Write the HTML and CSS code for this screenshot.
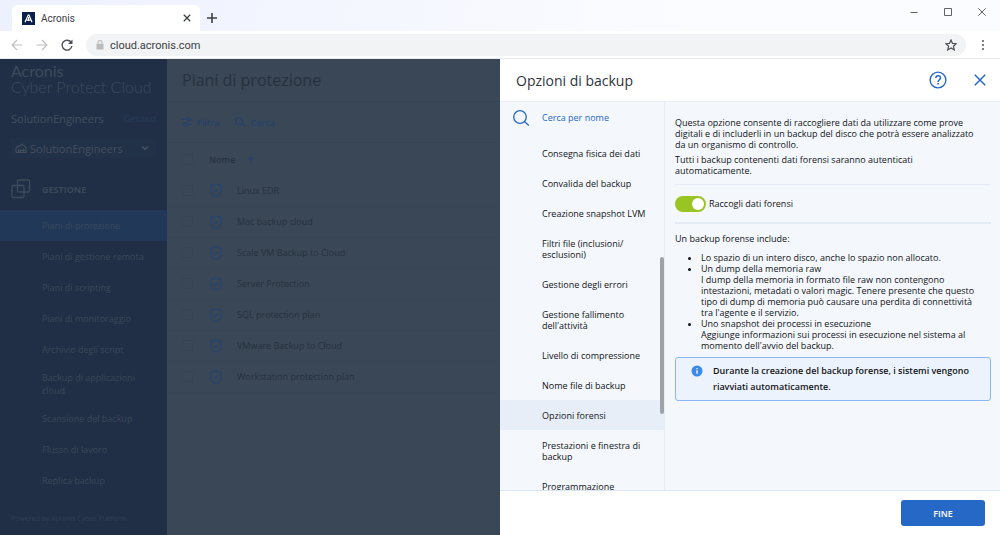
FILE: index.html
```html
<!DOCTYPE html>
<html lang="it">
<head>
  <meta charset="UTF-8">
  <meta name="viewport" content="width=device-width, initial-scale=1.0">
  <title>Acronis</title>
  <link rel="stylesheet" href="styles.css">
</head>
<body>
  <header class="browser">
    <div class="tab-strip">
      <div class="tab">
        <svg class="favicon" width="13" height="13" viewBox="0 0 13 13"><rect width="13" height="13" fill="#0b1f4d"/><path d="M3 10.2 6.2 3h.8l3 7.2M4.6 8.2h3.9M6.6 5v4" fill="none" stroke="#fff" stroke-width="1.2"/></svg>
        <span class="tab-title">Acronis</span>
        <button class="plain" aria-label="Chiudi scheda"><svg width="8" height="8" viewBox="0 0 8 8"><path d="M.8.8l6.4 6.4M7.2.8.8 7.2" stroke="#3c4043" stroke-width="1.3"/></svg></button>
      </div>
      <button class="plain new-tab" aria-label="Nuova scheda"><svg width="10" height="10" viewBox="0 0 10 10"><path d="M5 0v10M0 5h10" stroke="#3c4043" stroke-width="1.6"/></svg></button>
      <div class="window-buttons">
        <button class="plain" aria-label="Riduci"><svg width="8" height="8" viewBox="0 0 8 8"><path d="M.5 4.5h7" stroke="#5f6368"/></svg></button>
        <button class="plain" aria-label="Ingrandisci"><svg width="8" height="8" viewBox="0 0 8 8"><path d="M.5.5h7v7h-7z" fill="none" stroke="#5f6368"/></svg></button>
        <button class="plain" aria-label="Chiudi"><svg width="8" height="8" viewBox="0 0 8 8"><path d="M.3.3l7.4 7.4M7.7.3.3 7.7" stroke="#5f6368"/></svg></button>
      </div>
    </div>
    <div class="toolbar">
      <button class="plain" aria-label="Indietro"><svg width="12" height="12" viewBox="0 0 12 12"><path d="M11.3 6H1.2M6 1 1.1 6 6 11" fill="none" stroke="#bdbfc1" stroke-width="1.2"/></svg></button>
      <button class="plain" aria-label="Avanti"><svg width="12" height="12" viewBox="0 0 12 12"><path d="M.7 6h10.1M6 1l4.9 5L6 11" fill="none" stroke="#bdbfc1" stroke-width="1.2"/></svg></button>
      <button class="plain" aria-label="Ricarica"><svg width="12" height="12" viewBox="0 0 12 12"><path d="M10.3 3.7A4.9 4.9 0 1 0 10.9 7" fill="none" stroke="#4d5156" stroke-width="1.4"/><path d="M11.5.6v4.500H7z" fill="#4d5156"/></svg></button>
      <label class="address">
        <svg width="8" height="10" viewBox="0 0 8 10"><path d="M.5 3.8h7v5.700h-7z" fill="#b9bbbd"/><path d="M2 4V2.500a2 2 0 0 1 4 0V4" fill="none" stroke="#b9bbbd" stroke-width="1.1"/></svg>
        <input type="text" value="cloud.acronis.com" aria-label="Indirizzo">
        <svg width="12" height="12" viewBox="0 0 12 12"><path d="M6 1l1.500 3.400 3.700.3-2.800 2.500.9 3.700L6 8.900l-3.300 2 .9-3.700L.8 4.700l3.700-.3z" fill="none" stroke="#4d5156" stroke-width="1.2"/></svg>
      </label>
      <button class="plain menu-button" aria-label="Menu"><svg width="4" height="12" viewBox="0 0 4 12" fill="#5f6368"><circle cx="2" cy="2" r="1.1"/><circle cx="2" cy="6" r="1.1"/><circle cx="2" cy="10" r="1.1"/></svg></button>
    </div>
  </header>

  <div class="app">
    <aside class="sidebar">
      <div class="brand">
        <div class="brand-name">Acronis</div>
        <div class="brand-product">Cyber Protect Cloud</div>
      </div>
      <div class="tenant">
        <span>SolutionEngineers</span>
        <a href="#">Gestisci</a>
      </div>
      <div class="tenant-select">
        <svg width="12" height="10" viewBox="0 0 12 10"><path d="M1 9.400V5L4 2.500M3.500 4.200 7 1l4 3.500v5H1M3.500 9V6.500M5.500 9V6M8.500 9V5.500M4 7.500h6" fill="none" stroke="#424e5c" stroke-width="1.2"/></svg>
        <select aria-label="Tenant"><option>SolutionEngineers</option></select>
        <svg width="8" height="6" viewBox="0 0 8 6"><path d="M1 1.500l3 2.700 3-2.700" fill="none" stroke="#4a5563" stroke-width="1.4"/></svg>
      </div>
      <div class="section-title">
        <svg width="20" height="20" viewBox="0 0 20 20"><g fill="none" stroke="#3d4b5c" stroke-width="1.3"><rect x="6.500" y="1" width="12" height="12" rx="1"/><rect x="1" y="6.500" width="12" height="12" rx="1"/></g></svg>
        GESTIONE
      </div>
      <nav class="side-nav">
        <a class="active" href="#">Piani di protezione</a>
        <a href="#">Piani di gestione remota</a>
        <a href="#">Piani di scripting</a>
        <a href="#">Piani di monitoraggio</a>
        <a href="#">Archivio degli script</a>
        <a href="#">Backup di applicazioni cloud</a>
        <a href="#">Scansione del backup</a>
        <a href="#">Flusso di lavoro</a>
        <a href="#">Replica backup</a>
      </nav>
      <div class="powered">Powered by Acronis Cyber Platform</div>
    </aside>

    <main class="plans">
      <h1>Piani di protezione</h1>
      <div class="actions">
        <button class="plain"><svg width="10" height="10" viewBox="0 0 10 10"><g fill="none" stroke="#26426c" stroke-width="1.2"><path d="M0 2.500h5M8.500 2.500H10M0 7.500h1.500M5 7.500h5"/><circle cx="6.700" cy="2.500" r="1.6"/><circle cx="3.200" cy="7.500" r="1.6"/></g></svg>Filtra</button>
        <button class="plain"><svg width="10" height="10" viewBox="0 0 10 10"><g fill="none" stroke="#26426c" stroke-width="1.3"><circle cx="4.200" cy="4.200" r="3.4"/><path d="M6.700 6.700 9.500 9.500"/></g></svg>Cerca</button>
      </div>
      <table>
        <thead>
          <tr>
            <th class="check"><input type="checkbox" aria-label="Seleziona tutto"></th>
            <th colspan="2">Nome <svg class="sort" width="6" height="8" viewBox="0 0 6 8"><path d="M3 7.500V1M.5 3.500 3 1l2.500 2.500" fill="none" stroke="#26426c" stroke-width="1.2"/></svg></th>
          </tr>
        </thead>
        <tbody id="plan-rows"></tbody>
      </table>
    </main>

    <section class="drawer">
      <header class="drawer-header">
        <h2>Opzioni di backup</h2>
        <button class="plain" aria-label="Guida"><svg width="18" height="18" viewBox="0 0 18 18" fill="none" stroke="#2668c5"><circle cx="9" cy="9" r="7.900" stroke-width="1.4"/><path d="M6.800 7.100c0-3.200 4.700-3 4.700-.2 0 1.900-2.400 1.800-2.400 4" stroke-width="1.5"/><path d="M9.100 12v1.600" stroke-width="1.6"/></svg></button>
        <button class="plain" aria-label="Chiudi pannello"><svg width="12" height="12" viewBox="0 0 12 12"><path d="M.8.8l10.400 10.400M11.200.8.8 11.200" stroke="#2668c5" stroke-width="1.5"/></svg></button>
      </header>
      <div class="drawer-body">
        <div class="options">
          <label class="search">
            <svg width="18" height="18" viewBox="0 0 18 18"><g fill="none" stroke="#2668c5" stroke-width="1.3"><circle cx="8" cy="8" r="6.300"/><path d="M12.500 12.500l4.300 4"/></g></svg>
            <input type="text" placeholder="Cerca per nome" aria-label="Cerca per nome">
          </label>
          <nav class="option-list">
            <a href="#">Consegna fisica dei dati</a>
            <a href="#">Convalida del backup</a>
            <a href="#">Creazione snapshot LVM</a>
            <a href="#">Filtri file (inclusioni/<br>esclusioni)</a>
            <a href="#">Gestione degli errori</a>
            <a href="#">Gestione fallimento<br>dell'attività</a>
            <a href="#">Livello di compressione</a>
            <a href="#">Nome file di backup</a>
            <a class="selected" href="#">Opzioni forensi</a>
            <a href="#">Prestazioni e finestra di<br>backup</a>
            <a href="#">Programmazione</a>
          </nav>
          <div class="scroll-thumb"></div>
        </div>
        <div class="detail">
          <p>Questa opzione consente di raccogliere dati da utilizzare come prove digitali e di includerli in un backup del disco che potrà essere analizzato da un organismo di controllo.</p>
          <p>Tutti i backup contenenti dati forensi saranno autenticati automaticamente.</p>
          <label class="toggle">
            <input type="checkbox" checked>
            Raccogli dati forensi
          </label>
          <p class="includes">Un backup forense include:</p>
          <ul>
            <li>Lo spazio di un intero disco, anche lo spazio non allocato.</li>
            <li>Un dump della memoria raw<br>I dump della memoria in formato file raw non contengono intestazioni, metadati o valori magic. Tenere presente che questo tipo di dump di memoria può causare una perdita di connettività tra l'agente e il servizio.</li>
            <li>Uno snapshot dei processi in esecuzione<br>Aggiunge informazioni sui processi in esecuzione nel sistema al momento dell'avvio del backup.</li>
          </ul>
          <div class="note">
            <svg width="12" height="12" viewBox="0 0 12 12"><circle cx="6" cy="6" r="5.500" fill="#3c8ae8"/><path d="M6 5.200v3.500M6 3v1.300" stroke="#fff" stroke-width="1.3"/></svg>
            <span>Durante la creazione del backup forense, i sistemi vengono riavviati automaticamente.</span>
          </div>
        </div>
      </div>
      <footer class="drawer-footer">
        <button class="done">FINE</button>
      </footer>
    </section>
  </div>

  <script>
    const plans = [
      'Linux EDR',
      'Mac backup cloud',
      'Scale VM Backup to Cloud',
      'Server Protection',
      'SQL protection plan',
      'VMware Backup to Cloud',
      'Workstation protection plan'
    ];

    document.getElementById('plan-rows').innerHTML = plans.map(plan => `
      <tr>
        <td class="check"><input type="checkbox" aria-label="${plan}"></td>
        <td class="shield"><svg width="14" height="14" viewBox="0 0 14 14"><g fill="none" stroke="#26466f" stroke-width="1.2"><path d="M7 .7c1.500 1 3.300 1.500 5.400 1.600v4.900c0 3-2 5-5.400 6.200-3.400-1.200-5.400-3.200-5.400-6.200V2.300C3.700 2.200 5.500 1.700 7 .7z"/><path d="M4.700 7l1.600 1.600 3-3.200"/></g></svg></td>
        <td>${plan}</td>
      </tr>`).join('');
  </script>
</body>
</html>
```
FILE: styles.css
```css
* {
  box-sizing: border-box;
}
body {
  margin: 0;
  height: 100vh;
  display: flex;
  flex-direction: column;
  font-family: "Open Sans", "Noto Sans", sans-serif;
  font-size: 9px;
  color: #121417;
  overflow: hidden;
}
a {
  color: inherit;
  text-decoration: none;
}
svg {
  display: block;
  flex-shrink: 0;
}
button, input, select {
  font: inherit;
  color: inherit;
}
.plain {
  display: flex;
  align-items: center;
  background: none;
  border: none;
  padding: 0;
  cursor: pointer;
}

/* browser window */
.browser {
  font-family: Roboto, sans-serif;
  font-size: 10px;
  color: #3c4043;
  border-bottom: 1px solid #ececee;
}
.tab-strip {
  display: flex;
  height: 31px;
  padding: 5px 14px 0 12px;
  background: linear-gradient(100deg, #edf1fe, #fbfcff 70%);
}
.tab {
  display: flex;
  align-items: center;
  gap: 6px;
  width: 188px;
  padding: 0 9px 0 10px;
  background: #fff;
  border-radius: 6px 6px 0 0;
}
.tab-title {
  flex: 1;
}
.new-tab {
  margin-left: 7px;
}
.window-buttons {
  display: flex;
  gap: 26px;
  margin-left: auto;
  height: 13px;
}
.toolbar {
  display: flex;
  align-items: center;
  gap: 13px;
  padding: 3px 15px 2px 11px;
  background: #fff;
}
.address {
  display: flex;
  align-items: center;
  gap: 6px;
  flex: 1;
  height: 22px;
  padding: 0 9px 0 10px;
  background: #f1f3f4;
  border-radius: 11px;
}
.address input {
  flex: 1;
  padding: 0;
  border: none;
  background: none;
  font-size: 11px;
}
.menu-button {
  margin-left: 2px;
}

/* dimmed console */
.app {
  display: flex;
  flex: 1;
  min-height: 0;
}
.sidebar {
  display: flex;
  flex-direction: column;
  width: 167px;
  background: #202f46;
  color: #3a4858;
}
.brand {
  padding: 4px 11px 0;
  font-family: Lato, sans-serif;
  font-size: 16px;
  line-height: 16px;
  color: #3d4b5c;
}
.brand-product {
  font-weight: 300;
}
.tenant {
  display: flex;
  justify-content: space-between;
  align-items: center;
  margin: 16px 11px 0;
  line-height: 16px;
  font-size: 11px;
  color: #43505f;
}
.tenant a {
  font-size: 9px;
  color: #263d60;
}
.tenant-select {
  display: flex;
  align-items: center;
  gap: 3px;
  height: 20px;
  margin: 11px 11px 0;
  padding: 0 7px 0 4px;
  background: #213147;
  color: #43505f;
}
.tenant-select select {
  flex: 1;
  min-width: 0;
  padding: 0;
  border: none;
  background: none;
  appearance: none;
  font-size: 11px;
}
.section-title {
  display: flex;
  align-items: center;
  gap: 11px;
  height: 52px;
  padding-left: 11px;
  padding-top: 10px;
  font-weight: 700;
}
.side-nav a {
  display: flex;
  align-items: center;
  min-height: 31px;
  padding: 6px 20px 6px 42px;
  line-height: 13px;
}
.side-nav .active {
  background: #213859;
}
.powered {
  margin-top: auto;
  padding: 0 11px 10px;
  font-size: 7px;
  line-height: 12px;
  color: #304055;
}
.plans {
  flex: 1;
  min-width: 0;
  background: #3a4756;
  color: #26313f;
}
.plans h1 {
  margin: 0;
  padding-left: 15px;
  line-height: 42px;
  font-size: 16px;
  font-weight: 400;
  border-bottom: 1px solid #374453;
}
.actions {
  display: flex;
  gap: 16px;
  height: 41px;
  padding-left: 15px;
  font-weight: 600;
  color: #26426c;
  border-bottom: 1px solid #374453;
}
.actions button {
  gap: 5px;
}
table {
  width: 100%;
  border-collapse: collapse;
}
tr {
  height: 31px;
}
thead tr {
  height: 32px;
}
tbody tr {
  border-bottom: 1px solid #384554;
}
th, td {
  padding: 0;
  text-align: left;
}
th {
  font-weight: 600;
}
.check {
  width: 42px;
  padding-left: 15px;
}
.check input {
  display: block;
  appearance: none;
  width: 11px;
  height: 11px;
  margin: 0;
  border: 1px solid #374454;
  border-radius: 2px;
}
.sort {
  display: inline-block;
  vertical-align: middle;
  margin-left: 10px;
}
.shield {
  width: 28px;
}

/* backup options drawer */
.drawer {
  display: flex;
  flex-direction: column;
  width: 50%;
  background: #fff;
}
.drawer-header {
  display: flex;
  align-items: center;
  gap: 27px;
  height: 42px;
  padding: 0 14px 0 16px;
}
.drawer-header h2 {
  flex: 1;
  margin: 0;
  font-size: 14px;
  font-weight: 400;
  color: #30343b;
}
.drawer-body {
  display: flex;
  flex: 1;
  min-height: 0;
  background: #f4f7fc;
  border-top: 1px solid #e9eff8;
  border-bottom: 1px solid #dae6f3;
}
.options {
  position: relative;
  width: 33%;
  overflow: hidden;
  border-right: 1px solid #e6edf7;
}
.search {
  display: flex;
  align-items: center;
  gap: 12px;
  height: 31px;
  padding-left: 12px;
}
.search input {
  flex: 1;
  min-width: 0;
  padding: 0;
  border: none;
  background: none;
}
.search input::placeholder {
  color: #2668c5;
}
.option-list {
  padding-top: 5px;
}
.option-list a {
  display: block;
  padding: 10px 12px 9px 42px;
  line-height: 11px;
}
.option-list .selected {
  background: #e7eef8;
}
.scroll-thumb {
  position: absolute;
  top: 155px;
  right: 0;
  width: 4px;
  height: 157px;
  border-radius: 2px;
  background: #9fa3a8;
}
.detail {
  flex: 1;
  padding: 15px 9px 0 10px;
  line-height: 11px;
}
.detail p {
  margin: 0 0 4px;
  padding-right: 8px;
}
.toggle {
  display: flex;
  align-items: center;
  gap: 3px;
  height: 40px;
  margin-top: 8px;
  border-top: 1px solid #e4ebf6;
  border-bottom: 2px solid #e4ebf6;
}
.toggle input {
  appearance: none;
  display: flex;
  justify-content: flex-end;
  width: 31px;
  height: 16px;
  margin: 0;
  padding: 2px;
  border-radius: 8px;
  background: #9ac423;
}
.toggle input::before {
  content: "";
  width: 12px;
  height: 12px;
  border-radius: 50%;
  background: #fff;
}
.detail .includes {
  margin-top: 9px;
}
.detail ul {
  margin: 8px 0 0;
  padding: 0 8px 0 26px;
}
.note {
  display: flex;
  gap: 10px;
  margin-top: 6px;
  padding: 5px 12px 5px 15px;
  border: 1px solid #8ab8f4;
  border-radius: 3px;
  background: #ecf3fd;
  font-weight: 600;
  line-height: 16px;
}
.note svg {
  margin-top: 2px;
}
.drawer-footer {
  display: flex;
  justify-content: flex-end;
  padding: 9px 15px;
}
.done {
  width: 84px;
  height: 26px;
  border: none;
  border-radius: 3px;
  background: #2668c5;
  color: #fff;
  font-weight: 600;
  cursor: pointer;
}
```
